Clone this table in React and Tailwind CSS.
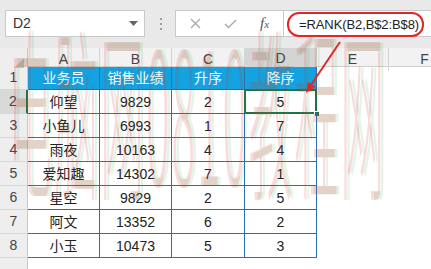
import React from "react";

const font = { fontFamily: "'Liberation Sans','Noto Sans CJK SC',sans-serif" };

const rows = [
  ["仰望", 9829, 2, 5],
  ["小鱼儿", 6993, 1, 7],
  ["雨夜", 10163, 4, 4],
  ["爱知趣", 14302, 7, 1],
  ["星空", 9829, 2, 5],
  ["阿文", 13352, 6, 2],
  ["小玉", 10473, 5, 3],
];

const GRID = "grid grid-cols-[28px_72px_72px_73px_72px_72px_72px]";

function RowHead({ n, active, h }) {
  return (
    <div
      className={`flex items-end justify-center pb-[1px] border-b border-[#d6d6d6] text-[14px] text-[#444] ${
        active ? "bg-[#d9d9d9] border-r-2 border-r-[#217346]" : "bg-[#eeeeee] border-r border-r-[#c9c9c9]"
      } ${h}`}
    >
      {n}
    </div>
  );
}

function Cell({ children, cls = "" }) {
  return (
    <div className={`flex items-center justify-center pt-[2px] border-r border-b border-[#2f6db3] text-[14px] text-[#222] ${cls}`}>
      {children}
    </div>
  );
}

export default function App() {
  return (
    <div className="relative w-[431px] h-[269px] overflow-hidden bg-white" style={font}>
      {/* toolbar */}
      <div className="flex items-start h-[48px] bg-[#e9e9e9] pt-[10px]">
        <div className="ml-[5px] w-[140px] h-[27px] bg-white border border-[#c9c9c9] flex items-center justify-between pl-[7px] pr-[6px]">
          <span className="text-[14px] text-[#333]">D2</span>
          <svg width="9" height="6" viewBox="0 0 9 6">
            <polygon points="0,0 9,0 4.5,5" fill="#666" />
          </svg>
        </div>
        <div className="ml-[15px] h-[27px] flex flex-col justify-center gap-[3px]">
          <span className="w-[2px] h-[2px] bg-[#a0a0a0]" />
          <span className="w-[2px] h-[2px] bg-[#a0a0a0]" />
          <span className="w-[2px] h-[2px] bg-[#a0a0a0]" />
        </div>
        <div className="ml-[13px] w-[109px] h-[27px] bg-white border border-[#c9c9c9] flex items-center">
          <svg className="ml-[14px]" width="11" height="11" viewBox="0 0 11 11">
            <path d="M1 1 L10 10 M10 1 L1 10" stroke="#a8a8a8" strokeWidth="1.3" />
          </svg>
          <svg className="ml-[23px]" width="13" height="10" viewBox="0 0 13 10">
            <path d="M1 5 L4.5 8.5 L12 1" stroke="#a8a8a8" strokeWidth="1.4" fill="none" />
          </svg>
          <span
            className="ml-[23px] italic text-[15px] text-[#555]"
            style={{ fontFamily: "'Liberation Serif',serif" }}
          >
            f<span className="text-[11px]">x</span>
          </span>
        </div>
        <div className="flex-1 h-[27px] bg-white border-y border-[#c9c9c9] flex items-start">
          <div className="ml-[3px] mt-[1px] w-[137px] h-[25px] border-2 border-[#e1262b] rounded-[12px] flex items-center pl-[10px]">
            <span className="text-[13px] text-[#222] whitespace-nowrap tracking-[-0.1px]">=RANK(B2,B$2:B$8)</span>
          </div>
        </div>
      </div>

      {/* column headers */}
      <div className={`${GRID} h-[19px] bg-[#f2f2f2] border-b border-[#cfcfcf]`}>
        <div className="relative bg-[#eeeeee] border-r border-[#c9c9c9]">
          <svg className="absolute right-[3px] bottom-[3px]" width="10" height="10" viewBox="0 0 10 10">
            <polygon points="10,0 10,10 0,10" fill="#c4c4c4" />
          </svg>
        </div>
        {["A", "B", "C", "D", "E", "F"].map((l) => (
          <div
            key={l}
            className={`flex items-center justify-center text-[14px] text-[#444] border-r border-[#d4d4d4] ${
              l === "D" ? "bg-[#d4d4d4] border-b-2 border-b-[#217346]" : ""
            }`}
          >
            {l}
          </div>
        ))}
      </div>

      {/* row 1 header */}
      <div className={`${GRID} h-[23px]`}>
        <RowHead n={1} h="h-[23px]" />
        {["业务员", "销售业绩", "升序", "降序"].map((t) => (
          <div
            key={t}
            className="flex items-center justify-center pt-[1px] bg-[#14a2e3] border-r border-b border-[#2f6db3] text-[14px] text-white"
          >
            {t}
          </div>
        ))}
        <div />
        <div />
      </div>

      {rows.map((r, i) => (
        <div key={i} className={`${GRID} h-[24px]`}>
          <RowHead n={i + 2} active={i === 0} h="h-[24px]" />
          <Cell>{r[0]}</Cell>
          <Cell>{r[1]}</Cell>
          <Cell>{r[2]}</Cell>
          <Cell cls="relative">
            {r[3]}
            {i === 0 && (
              <>
                <div className="absolute -left-[1px] -top-[1px] -right-[1px] -bottom-[1px] border-2 border-[#217346]" />
                <div className="absolute -right-[4px] -bottom-[4px] w-[6px] h-[6px] bg-[#217346] border border-white" />
              </>
            )}
          </Cell>
          <div />
          <div />
        </div>
      ))}

      <div className={`${GRID} h-[24px]`}>
        <RowHead n="" h="h-[24px]" />
      </div>

      {/* watermark */}
      <div className="pointer-events-none absolute left-[8px] top-[14px] whitespace-nowrap">
        <div
          className="text-[44px] leading-none tracking-[2px] text-[rgba(228,40,40,0.17)] origin-top-left scale-y-[4.2]"
          style={{ fontFamily: "'Noto Sans CJK SC',sans-serif", fontWeight: 300, textShadow: "3px 0 0 rgba(40,170,80,0.13)" }}
        >
          电脑网0810教程网
        </div>
      </div>

      {/* arrow */}
      <svg className="pointer-events-none absolute left-0 top-0" width="431" height="269">
        <line x1="340" y1="42" x2="311" y2="85" stroke="#e02828" strokeWidth="2" />
        <polygon points="306,93 315.5,87 308,82" fill="#e02828" />
      </svg>
    </div>
  );
}
